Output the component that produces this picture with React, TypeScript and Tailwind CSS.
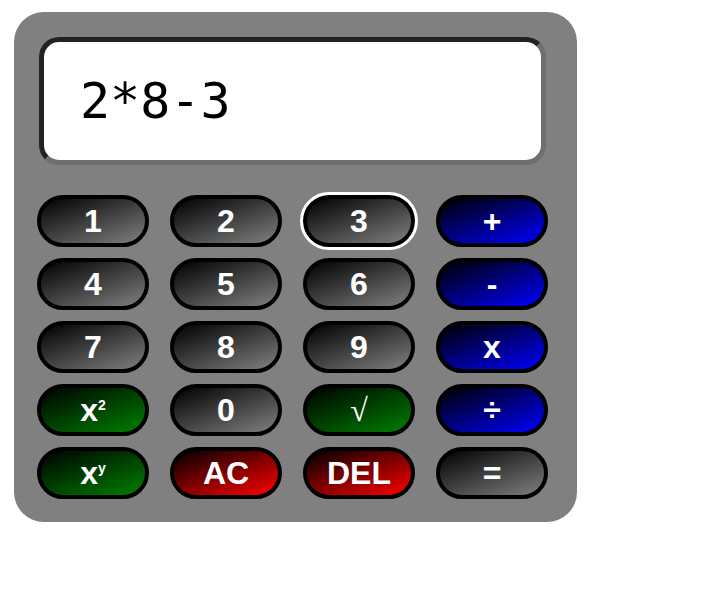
import React from 'react';

type Key = {
    label: React.ReactNode;
    tone: 'gray' | 'blue' | 'green' | 'red';
    focused?: boolean;
    thin?: boolean;
};

const tones: Record<Key['tone'], string> = {
    gray: 'bg-[linear-gradient(160deg,#000000,#808080)]',
    blue: 'bg-[linear-gradient(160deg,#000000,#0000ff)]',
    green: 'bg-[linear-gradient(160deg,#000000,#008000)]',
    red: 'bg-[linear-gradient(160deg,#000000,#ff0000)]',
};

const Pow = ({ exp }: { exp: string }) => (
    <span>
        x<span className="relative -top-[11px] text-[14px]">{exp}</span>
    </span>
);

const keys: Key[] = [
    { label: '1', tone: 'gray' },
    { label: '2', tone: 'gray' },
    { label: '3', tone: 'gray', focused: true },
    { label: '+', tone: 'blue' },
    { label: '4', tone: 'gray' },
    { label: '5', tone: 'gray' },
    { label: '6', tone: 'gray' },
    { label: '-', tone: 'blue' },
    { label: '7', tone: 'gray' },
    { label: '8', tone: 'gray' },
    { label: '9', tone: 'gray' },
    { label: 'x', tone: 'blue' },
    { label: <Pow exp="2" />, tone: 'green' },
    { label: '0', tone: 'gray' },
    { label: '√', tone: 'green', thin: true },
    { label: '÷', tone: 'blue' },
    { label: <Pow exp="y" />, tone: 'green' },
    { label: 'AC', tone: 'red' },
    { label: 'DEL', tone: 'red' },
    { label: '=', tone: 'gray' },
];

export default function App() {
    return (
        <div className="min-h-[604px] w-full bg-white pt-[12px] pl-[14px]">
            <div className="w-[563px] h-[510px] rounded-[30px] bg-[#808080] pt-[25px] pl-[23px]">
                <div className="ml-[2px] w-[507px] h-[128px] rounded-[20px] bg-white border-[5px] border-t-[#222222] border-l-[#222222] border-r-[#6e6e6e] border-b-[#6e6e6e] flex items-center pl-[36px]">
                    <span className="text-[50px] leading-none text-black font-['DejaVu_Sans_Mono',monospace]">2*8-3</span>
                </div>
                <div className="mt-[30px] grid grid-cols-[repeat(4,112px)] auto-rows-[52px] gap-x-[21px] gap-y-[11px]">
                    {keys.map((k, i) => (
                        <button
                            key={i}
                            className={`rounded-full border-[4px] border-black text-white text-[32px] leading-none flex items-center justify-center ${k.thin ? "font-normal font-['Liberation_Serif',serif]" : "font-bold font-['Liberation_Sans',Arial,sans-serif]"} ${tones[k.tone]} ${k.focused ? 'outline-[3px] outline-solid outline-white' : ''}`}
                        >
                            {k.label}
                        </button>
                    ))}
                </div>
            </div>
        </div>
    );
}
